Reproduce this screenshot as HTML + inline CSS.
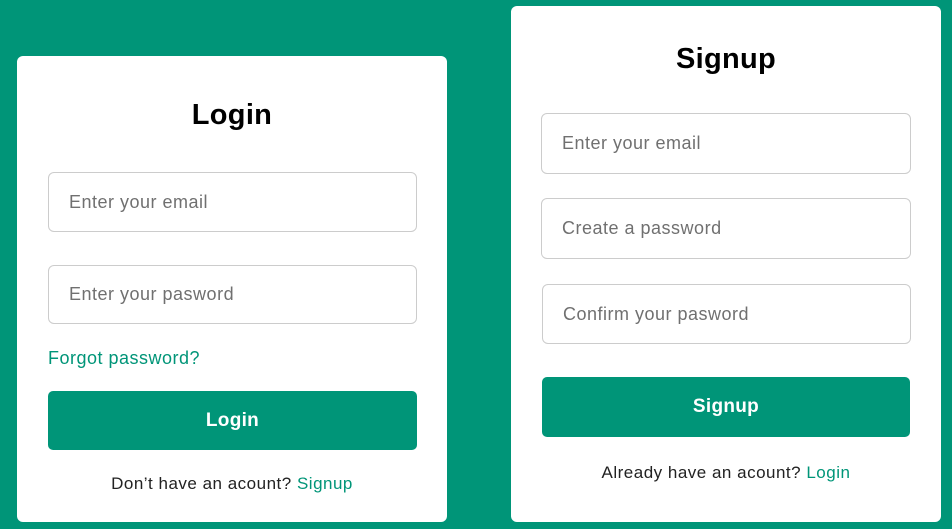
<!DOCTYPE html>
<html><head><style>
*{box-sizing:border-box;margin:0;padding:0}
body{width:952px;height:529px;background:#009578;font-family:"Liberation Sans",sans-serif;position:relative;overflow:hidden}
.card{position:absolute;background:#fff;border-radius:6px}
.t{position:absolute;left:0;right:0;text-align:center;font-weight:bold;color:#000;font-size:29px;letter-spacing:0.3px}
.in{position:absolute;border:1px solid #ccc;border-radius:6px;color:#707070;font-size:18px;letter-spacing:0.5px;padding-left:20px;display:flex;align-items:center}
.btn{position:absolute;background:#009578;border-radius:5px;color:#fff;font-weight:bold;font-size:19px;letter-spacing:0.3px;display:flex;align-items:center;justify-content:center}
.f{position:absolute;left:0;right:0;text-align:center;font-size:17px;letter-spacing:0.5px;color:#222}
.g{color:#009578}
</style></head><body>
<div class="card" style="left:17px;top:56px;width:430px;height:466px">
 <div class="t" style="top:43px">Login</div>
 <div class="in" style="left:31px;top:116px;width:369px;height:60px">Enter your email</div>
 <div class="in" style="left:31px;top:209px;width:369px;height:59px">Enter your pasword</div>
 <div style="position:absolute;left:31px;top:292px;font-size:18px;letter-spacing:0.5px;color:#009578">Forgot password?</div>
 <div class="btn" style="left:31px;top:335px;width:369px;height:59px">Login</div>
 <div class="f" style="top:418px">Don’t have an acount? <span class="g">Signup</span></div>
</div>
<div class="card" style="left:511px;top:6px;width:430px;height:516px">
 <div class="t" style="top:37px">Signup</div>
 <div class="in" style="left:30px;top:107px;width:370px;height:61px">Enter your email</div>
 <div class="in" style="left:30px;top:192px;width:370px;height:61px">Create a password</div>
 <div class="in" style="left:31px;top:278px;width:369px;height:60px">Confirm your pasword</div>
 <div class="btn" style="left:31px;top:371px;width:368px;height:60px">Signup</div>
 <div class="f" style="top:457px">Already have an acount? <span class="g">Login</span></div>
</div>
</body></html>
